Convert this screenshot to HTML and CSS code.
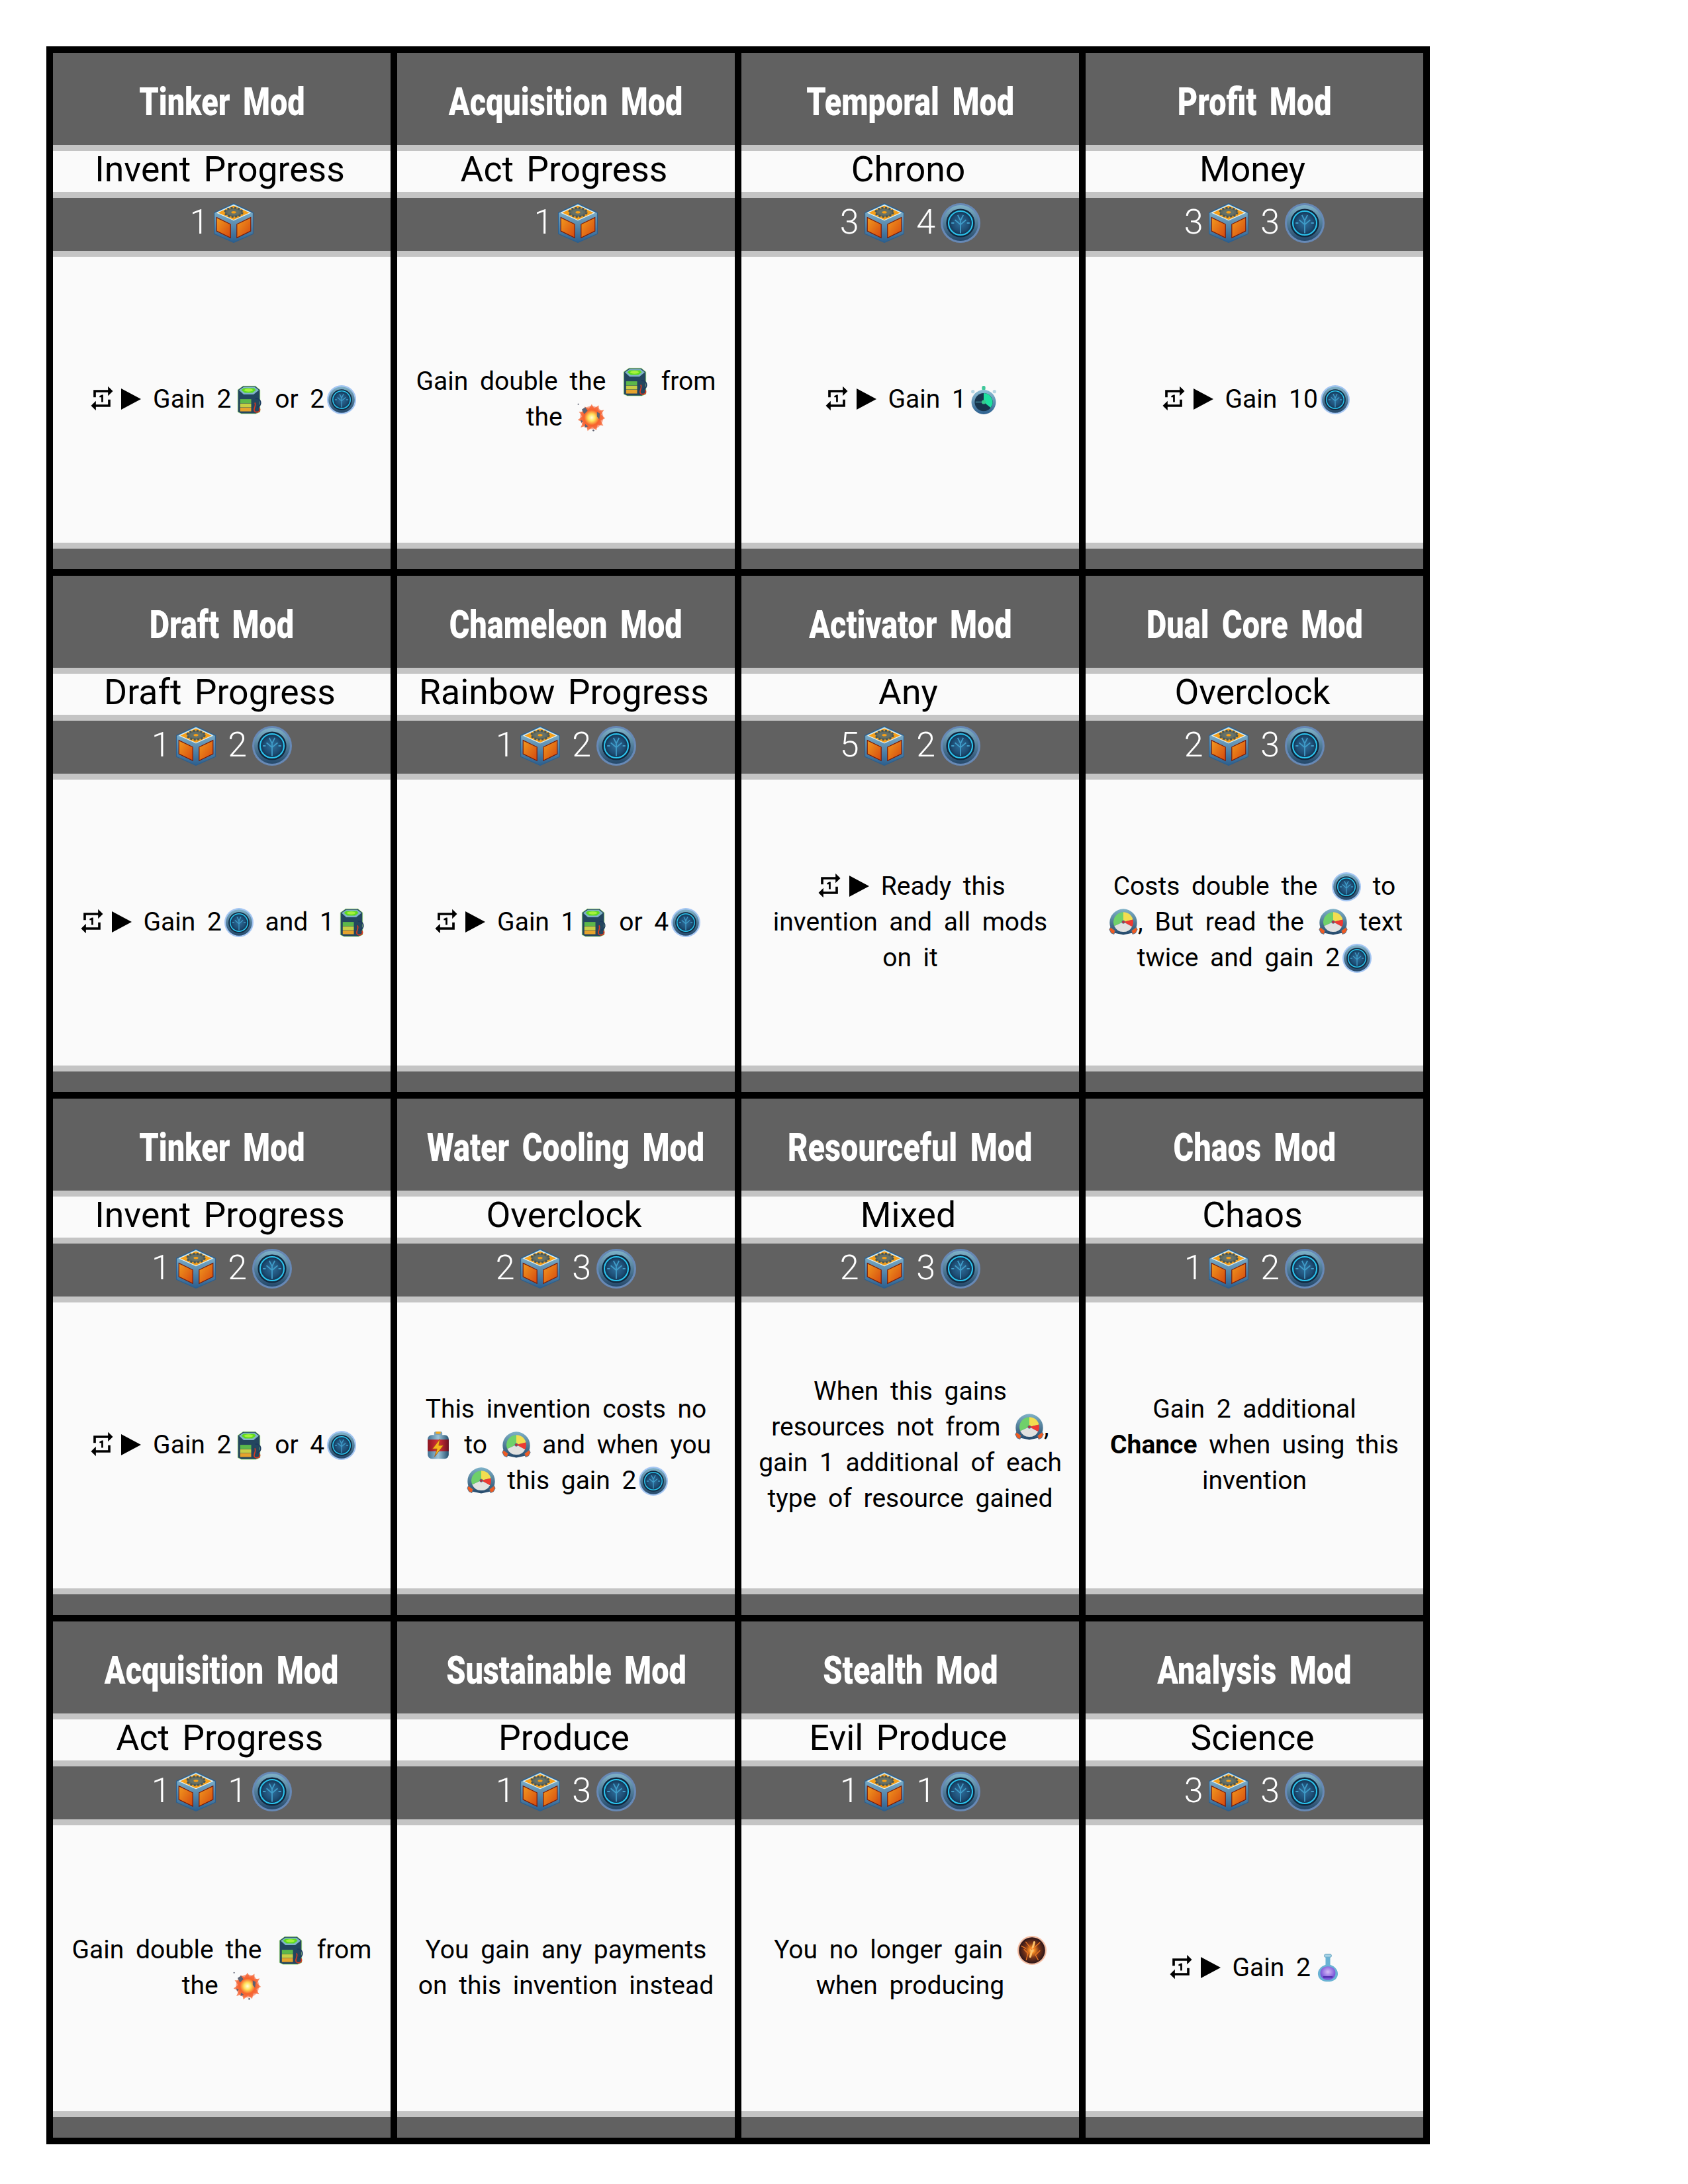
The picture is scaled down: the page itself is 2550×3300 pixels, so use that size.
FILE: index.html
```html
<!DOCTYPE html>
<html lang="en">
<head>
    <meta charset="UTF-8">
    <title>Mod Cards</title>
    <link rel="stylesheet" href="styles.css">
</head>
<body>
    <svg class="defs" xmlns="http://www.w3.org/2000/svg">
        <defs>
            <linearGradient id="steel" x1="0" y1="0" x2="0" y2="1"><stop offset="0" stop-color="#8fc0d6"/><stop offset="1" stop-color="#2c5f8e"/></linearGradient>
            <linearGradient id="panelL" x1="0" y1="0" x2="1" y2="1"><stop offset="0" stop-color="#f39a1e"/><stop offset="1" stop-color="#d4480f"/></linearGradient>
            <radialGradient id="coinFill"><stop offset="0" stop-color="#2f6f9c"/><stop offset=".7" stop-color="#1d4d74"/><stop offset="1" stop-color="#12304e"/></radialGradient>
            <linearGradient id="bevel" x1="0" y1="0" x2="0" y2="1"><stop offset="0" stop-color="#7fb2c8"/><stop offset="1" stop-color="#24486a"/></linearGradient>
            <radialGradient id="blast"><stop offset="0" stop-color="#fffde0"/><stop offset=".3" stop-color="#ffe25a"/><stop offset=".65" stop-color="#f7632c"/><stop offset="1" stop-color="#f4562a" stop-opacity=".4"/></radialGradient>
            <radialGradient id="lava"><stop offset="0" stop-color="#fff0b0"/><stop offset=".2" stop-color="#f58a22"/><stop offset=".55" stop-color="#7a3418"/><stop offset="1" stop-color="#2a161a"/></radialGradient>
            <linearGradient id="cell" x1="0" y1="0" x2="1" y2="0"><stop offset="0" stop-color="#3f6f92"/><stop offset=".5" stop-color="#9cc4d8"/><stop offset="1" stop-color="#24506f"/></linearGradient>
            <linearGradient id="cellRed" x1="0" y1="0" x2="1" y2="0"><stop offset="0" stop-color="#8e1420"/><stop offset=".5" stop-color="#d8313a"/><stop offset="1" stop-color="#701020"/></linearGradient>
            <radialGradient id="potion" cx=".5" cy=".4"><stop offset="0" stop-color="#d7bcf7"/><stop offset="1" stop-color="#7a55d8"/></radialGradient>

            <symbol id="box" viewBox="0 0 100 100">
                <path d="M50 1 99 24V77L50 99 1 77V24Z" fill="url(#steel)" stroke="#2c5f8e" stroke-width="2" stroke-linejoin="round"/>
                <path d="M50 5 92 24 50 43 8 24Z" fill="#f6a019" stroke="#dff0f4" stroke-width="2" stroke-linejoin="round"/>
                <path d="M7 36 42 53V87L7 70Z" fill="url(#panelL)" stroke="#7a1b08" stroke-width="2"/>
                <path d="M93 36 58 53V87L93 70Z" fill="url(#panelL)" stroke="#7a1b08" stroke-width="2"/>
                <ellipse cx="50" cy="23" rx="22" ry="11" fill="#5f6a62" stroke="#4b5550" stroke-width="5" stroke-dasharray="5 4"/>
                <ellipse cx="50" cy="23" rx="15" ry="7.5" fill="#667269"/>
                <ellipse cx="50" cy="23" rx="6" ry="3" fill="#f6a019"/>
            </symbol>

            <symbol id="coin" viewBox="0 0 100 100">
                <circle cx="50" cy="50" r="50" fill="#6aa4ee" opacity=".6"/>
                <circle cx="50" cy="50" r="45" fill="url(#bevel)"/>
                <circle cx="50" cy="50" r="36" fill="#10283f"/>
                <circle cx="50" cy="50" r="30" fill="url(#coinFill)" stroke="#2bc4ee" stroke-width="3.5"/>
                <path d="M50 76V44M50 54 36 42M50 54 64 42M50 44 43 30M50 44 57 30M34 50H27M66 50H73" fill="none" stroke="#3f9cc8" stroke-width="3"/>
            </symbol>

            <symbol id="block" viewBox="0 0 100 100">
                <path d="M12 16 30 3H72L88 16V92L74 98H24L12 92Z" fill="#23465f" stroke="#9ee86a" stroke-width="1.5"/>
                <path d="M16 17 32 6H70L84 17 66 32H32Z" fill="#7fb4c8"/>
                <path d="M32 10H68L74 17 62 26H36L24 17Z" fill="#5fdc1e"/>
                <ellipse cx="49" cy="17" rx="15" ry="5" fill="#a6f23c"/>
                <rect x="20" y="48" width="38" height="14" fill="#5cb84a"/>
                <rect x="20" y="63" width="38" height="13" fill="#c7cf45"/>
                <rect x="20" y="77" width="38" height="13" fill="#e6a32d"/>
                <path d="M72 46C92 42 98 70 78 76" fill="none" stroke="#1c3a5e" stroke-width="4"/>
                <path d="M70 60C78 70 62 82 70 90 78 96 92 90 86 78" fill="none" stroke="#d83a20" stroke-width="4"/>
            </symbol>

            <symbol id="watch" viewBox="0 0 100 100">
                <rect x="44" y="2" width="12" height="16" rx="5" fill="#3fc79a"/>
                <circle cx="13" cy="22" r="6" fill="#b8d8e4"/>
                <circle cx="87" cy="22" r="6" fill="#b8d8e4"/>
                <circle cx="50" cy="58" r="42" fill="url(#steel)"/>
                <circle cx="50" cy="58" r="31" fill="#17344c"/>
                <path d="M50 58V27A31 31 0 0 1 74 77Z" fill="#1fe0a0"/>
                <path d="M50 58H22" stroke="#3a7a8c" stroke-width="4"/>
                <circle cx="50" cy="58" r="7" fill="#35c98c"/>
            </symbol>

            <symbol id="gauge" viewBox="0 0 100 100">
                <path d="M3 50A47 47 0 0 1 97 50C97 66 90 78 80 86L50 92 20 86C10 78 3 66 3 50Z" fill="url(#bevel)"/>
                <path d="M50 48 19 62A34 34 0 0 1 50 14Z" fill="#6fd06a"/>
                <path d="M50 48V14A34 34 0 0 1 83 40Z" fill="#f2de50"/>
                <path d="M50 48 83 40A34 34 0 0 1 80 64Z" fill="#ee3a32"/>
                <path d="M50 48 80 64A34 34 0 0 1 19 62Z" fill="#e2e2e0"/>
                <path d="M6 66 22 78 18 90 8 86 2 74Z" fill="#ef5a22" stroke="#4a6f8c" stroke-width="2"/>
                <path d="M94 66 78 78 82 90 92 86 98 74Z" fill="#ef5a22" stroke="#4a6f8c" stroke-width="2"/>
                <circle cx="50" cy="48" r="5" fill="#c22a3a" stroke="#4a6f8c" stroke-width="2"/>
            </symbol>

            <symbol id="battery" viewBox="0 0 100 100">
                <rect x="36" y="2" width="28" height="16" rx="6" fill="#7fa3b8"/>
                <ellipse cx="50" cy="6" rx="9" ry="4" fill="#f3a81e"/>
                <rect x="14" y="14" width="72" height="82" rx="14" fill="url(#cell)"/>
                <rect x="14" y="30" width="72" height="40" fill="url(#cellRed)"/>
                <path d="M56 28 30 62H46L38 88 68 50H52Z" fill="#f6b51e" stroke="#a4520e" stroke-width="2"/>
            </symbol>

            <symbol id="blastIcon" viewBox="0 0 100 100">
                <path d="M52 4 60 18 76 8 76 26 94 24 84 40 98 52 82 60 92 78 72 74 68 94 54 82 38 96 34 78 14 84 22 66 4 58 20 46 8 30 28 30 28 12 42 20Z" fill="#f7632c" opacity=".75"/>
                <circle cx="52" cy="50" r="40" fill="url(#blast)"/>
                <path d="M18 22 30 14 38 26 26 38ZM70 30 80 36 78 56 70 46ZM30 72 40 80 28 84ZM14 58 22 62 16 68Z" fill="#5d6272"/>
                <circle cx="6" cy="4" r="2.5" fill="#5d6272"/>
                <circle cx="58" cy="94" r="3" fill="#5d6272"/>
            </symbol>

            <symbol id="lavaBall" viewBox="0 0 100 100">
                <circle cx="50" cy="50" r="50" fill="#f08a5a" opacity=".55"/>
                <circle cx="50" cy="50" r="45" fill="url(#lava)"/>
                <path d="M58 22 44 72" stroke="#ffc46a" stroke-width="7" stroke-linecap="round"/>
                <path d="M50 48 28 20M52 46 78 22M22 46 36 60 30 84M78 50 62 66 72 84M12 34 30 44" fill="none" stroke="#f27a22" stroke-width="3"/>
            </symbol>

            <symbol id="flask" viewBox="0 0 100 100">
                <rect x="38" y="2" width="24" height="10" rx="4" fill="#a9d4e6" stroke="#3f8cb0" stroke-width="2"/>
                <path d="M42 12H58V38C76 44 86 58 84 72 82 88 68 96 50 96 32 96 18 88 16 72 14 58 24 44 42 38Z" fill="#6ab2d4"/>
                <path d="M24 66C24 52 36 44 50 44 64 44 76 52 76 66 76 82 64 90 50 90 36 90 24 82 24 66Z" fill="url(#potion)"/>
                <path d="M34 80H66" stroke="#4a2aa8" stroke-width="5"/>
            </symbol>

            <symbol id="repeat" viewBox="0 0 24 24">
                <path d="M7 7h10v3l4-4-4-4v3H5v6h2V7zm10 10H7v-3l-4 4 4 4v-3h12v-6h-2v4zm-4-2V9h-1l-2 1v1h1.5v4H13z"/>
            </symbol>

            <symbol id="play" viewBox="0 0 30 32">
                <path d="M0 0 30 16 0 32Z"/>
            </symbol>
        </defs>
    </svg>

    <main class="sheet">
        <!-- row 1 -->
        <article class="card">
            <h2 class="title"><span>Tinker Mod</span></h2>
            <div class="kind">Invent Progress</div>
            <div class="cost">1<svg class="ic"><use href="#box"/></svg></div>
            <p class="text"><svg class="ic rep"><use href="#repeat"/></svg> <svg class="ic tri"><use href="#play"/></svg> Gain 2<svg class="ic"><use href="#block"/></svg> or 2<svg class="ic"><use href="#coin"/></svg></p>
            <div class="foot"></div>
        </article>
        <article class="card">
            <h2 class="title"><span>Acquisition Mod</span></h2>
            <div class="kind">Act Progress</div>
            <div class="cost">1<svg class="ic"><use href="#box"/></svg></div>
            <p class="text">Gain double the <svg class="ic"><use href="#block"/></svg> from the <svg class="ic"><use href="#blastIcon"/></svg></p>
            <div class="foot"></div>
        </article>
        <article class="card">
            <h2 class="title"><span>Temporal Mod</span></h2>
            <div class="kind">Chrono</div>
            <div class="cost">3<svg class="ic"><use href="#box"/></svg> 4<svg class="ic"><use href="#coin"/></svg></div>
            <p class="text"><svg class="ic rep"><use href="#repeat"/></svg> <svg class="ic tri"><use href="#play"/></svg> Gain 1<svg class="ic"><use href="#watch"/></svg></p>
            <div class="foot"></div>
        </article>
        <article class="card">
            <h2 class="title"><span>Profit Mod</span></h2>
            <div class="kind">Money</div>
            <div class="cost">3<svg class="ic"><use href="#box"/></svg> 3<svg class="ic"><use href="#coin"/></svg></div>
            <p class="text"><svg class="ic rep"><use href="#repeat"/></svg> <svg class="ic tri"><use href="#play"/></svg> Gain 10<svg class="ic"><use href="#coin"/></svg></p>
            <div class="foot"></div>
        </article>

        <!-- row 2 -->
        <article class="card">
            <h2 class="title"><span>Draft Mod</span></h2>
            <div class="kind">Draft Progress</div>
            <div class="cost">1<svg class="ic"><use href="#box"/></svg> 2<svg class="ic"><use href="#coin"/></svg></div>
            <p class="text"><svg class="ic rep"><use href="#repeat"/></svg> <svg class="ic tri"><use href="#play"/></svg> Gain 2<svg class="ic"><use href="#coin"/></svg> and 1<svg class="ic"><use href="#block"/></svg></p>
            <div class="foot"></div>
        </article>
        <article class="card">
            <h2 class="title"><span>Chameleon Mod</span></h2>
            <div class="kind">Rainbow Progress</div>
            <div class="cost">1<svg class="ic"><use href="#box"/></svg> 2<svg class="ic"><use href="#coin"/></svg></div>
            <p class="text"><svg class="ic rep"><use href="#repeat"/></svg> <svg class="ic tri"><use href="#play"/></svg> Gain 1<svg class="ic"><use href="#block"/></svg> or 4<svg class="ic"><use href="#coin"/></svg></p>
            <div class="foot"></div>
        </article>
        <article class="card">
            <h2 class="title"><span>Activator Mod</span></h2>
            <div class="kind">Any</div>
            <div class="cost">5<svg class="ic"><use href="#box"/></svg> 2<svg class="ic"><use href="#coin"/></svg></div>
            <p class="text"><svg class="ic rep"><use href="#repeat"/></svg> <svg class="ic tri"><use href="#play"/></svg> Ready this<br>invention and all mods<br>on it</p>
            <div class="foot"></div>
        </article>
        <article class="card">
            <h2 class="title"><span>Dual Core Mod</span></h2>
            <div class="kind">Overclock</div>
            <div class="cost">2<svg class="ic"><use href="#box"/></svg> 3<svg class="ic"><use href="#coin"/></svg></div>
            <p class="text">Costs double the <svg class="ic"><use href="#coin"/></svg> to <svg class="ic"><use href="#gauge"/></svg>, But read the <svg class="ic"><use href="#gauge"/></svg> text twice and gain 2<svg class="ic"><use href="#coin"/></svg></p>
            <div class="foot"></div>
        </article>

        <!-- row 3 -->
        <article class="card">
            <h2 class="title"><span>Tinker Mod</span></h2>
            <div class="kind">Invent Progress</div>
            <div class="cost">1<svg class="ic"><use href="#box"/></svg> 2<svg class="ic"><use href="#coin"/></svg></div>
            <p class="text"><svg class="ic rep"><use href="#repeat"/></svg> <svg class="ic tri"><use href="#play"/></svg> Gain 2<svg class="ic"><use href="#block"/></svg> or 4<svg class="ic"><use href="#coin"/></svg></p>
            <div class="foot"></div>
        </article>
        <article class="card">
            <h2 class="title"><span>Water Cooling Mod</span></h2>
            <div class="kind">Overclock</div>
            <div class="cost">2<svg class="ic"><use href="#box"/></svg> 3<svg class="ic"><use href="#coin"/></svg></div>
            <p class="text">This invention costs no <svg class="ic"><use href="#battery"/></svg> to <svg class="ic"><use href="#gauge"/></svg> and when you <svg class="ic"><use href="#gauge"/></svg> this gain 2<svg class="ic"><use href="#coin"/></svg></p>
            <div class="foot"></div>
        </article>
        <article class="card">
            <h2 class="title"><span>Resourceful Mod</span></h2>
            <div class="kind">Mixed</div>
            <div class="cost">2<svg class="ic"><use href="#box"/></svg> 3<svg class="ic"><use href="#coin"/></svg></div>
            <p class="text">When this gains resources not from <svg class="ic"><use href="#gauge"/></svg>, gain 1 additional of each type of resource gained</p>
            <div class="foot"></div>
        </article>
        <article class="card">
            <h2 class="title"><span>Chaos Mod</span></h2>
            <div class="kind">Chaos</div>
            <div class="cost">1<svg class="ic"><use href="#box"/></svg> 2<svg class="ic"><use href="#coin"/></svg></div>
            <p class="text">Gain 2 additional<br><b>Chance</b> when using this<br>invention</p>
            <div class="foot"></div>
        </article>

        <!-- row 4 -->
        <article class="card">
            <h2 class="title"><span>Acquisition Mod</span></h2>
            <div class="kind">Act Progress</div>
            <div class="cost">1<svg class="ic"><use href="#box"/></svg> 1<svg class="ic"><use href="#coin"/></svg></div>
            <p class="text">Gain double the <svg class="ic"><use href="#block"/></svg> from the <svg class="ic"><use href="#blastIcon"/></svg></p>
            <div class="foot"></div>
        </article>
        <article class="card">
            <h2 class="title"><span>Sustainable Mod</span></h2>
            <div class="kind">Produce</div>
            <div class="cost">1<svg class="ic"><use href="#box"/></svg> 3<svg class="ic"><use href="#coin"/></svg></div>
            <p class="text">You gain any payments on this invention instead</p>
            <div class="foot"></div>
        </article>
        <article class="card">
            <h2 class="title"><span>Stealth Mod</span></h2>
            <div class="kind">Evil Produce</div>
            <div class="cost">1<svg class="ic"><use href="#box"/></svg> 1<svg class="ic"><use href="#coin"/></svg></div>
            <p class="text">You no longer gain <svg class="ic"><use href="#lavaBall"/></svg> when producing</p>
            <div class="foot"></div>
        </article>
        <article class="card">
            <h2 class="title"><span>Analysis Mod</span></h2>
            <div class="kind">Science</div>
            <div class="cost">3<svg class="ic"><use href="#box"/></svg> 3<svg class="ic"><use href="#coin"/></svg></div>
            <p class="text"><svg class="ic rep"><use href="#repeat"/></svg> <svg class="ic tri"><use href="#play"/></svg> Gain 2<svg class="ic"><use href="#flask"/></svg></p>
            <div class="foot"></div>
        </article>
    </main>
</body>
</html>
```
FILE: styles.css
```css
body {
    margin: 0;
    padding: 70px;
    background-color: #ffffff;
    font-family: 'Roboto', sans-serif;
}
.defs {
    display: block;
    width: 0;
    height: 0;
}
.sheet {
    display: grid;
    grid-template-columns: repeat(4, 510px);
    grid-auto-rows: 780px;
    gap: 10px;
    width: fit-content;
    padding: 10px;
    background-color: #000000;
}
.card {
    display: flex;
    flex-direction: column;
    background-color: #fafafa;
}
.title {
    height: 131px;
    margin: 0;
    padding-top: 8px;
    display: flex;
    align-items: center;
    justify-content: center;
    background-color: #616161;
    color: #ffffff;
    font-size: 60px;
    font-weight: 900;
    white-space: nowrap;
}
/* no condensed face installed, so squeeze the heavy one */
.title span {
    display: inline-block;
    transform: scaleX(0.78);
    word-spacing: 10px;
}
.kind {
    height: 54px;
    padding: 0 6px 8px 0;
    border-top: 9px solid #c4c4c4;
    display: flex;
    align-items: center;
    justify-content: center;
    color: #000000;
    font-size: 53.5px;
    word-spacing: 6px;
}
.cost {
    height: 80px;
    border-top: 9px solid #c4c4c4;
    line-height: 74px;
    text-align: center;
    background-color: #616161;
    color: #ffffff;
    font-size: 52px;
    font-weight: 300;
    word-spacing: 6px;
}
.cost .ic {
    width: 60px;
    height: 60px;
    margin-left: 8px;
    vertical-align: -14px;
}
.text {
    flex: 1;
    margin: 0;
    padding: 0 20px 2px;
    border-top: 9px solid #c4c4c4;
    align-content: center;
    text-align: center;
    color: #000000;
    font-size: 39px;
    line-height: 54px;
    word-spacing: 8px;
}
.ic {
    width: 44px;
    height: 44px;
    margin-left: 4px;
    vertical-align: -10px;
}
.rep {
    margin: 0 -10px 0 0;
    vertical-align: -8px;
}
.tri {
    width: 30px;
    height: 32px;
    margin-left: 0;
    vertical-align: -3px;
}
.foot {
    height: 31px;
    border-top: 9px solid #c4c4c4;
    background-color: #616161;
}
```
